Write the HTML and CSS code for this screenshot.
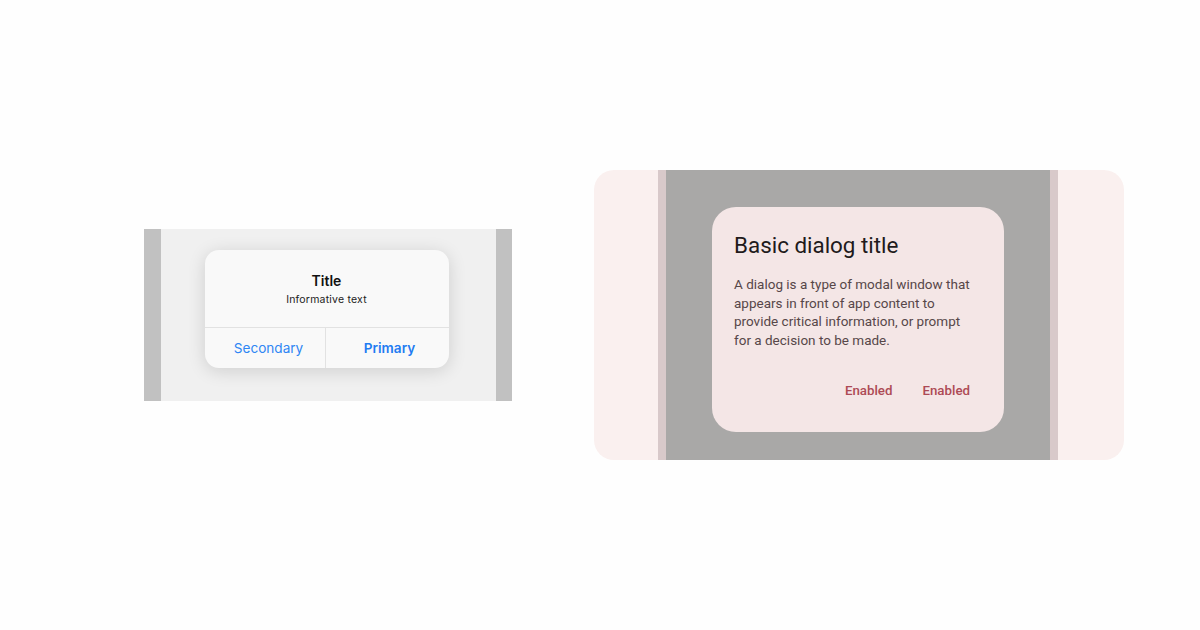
FILE: index.html
```html
<!DOCTYPE html>
<html>
<head>
<meta charset="utf-8">
<link rel="stylesheet" href="styles.css">
</head>
<body>
<main class="stage">
  <section class="ios-frame">
    <div class="ios-strip"></div>
    <div class="ios-screen">
      <div class="ios-alert">
        <div class="ios-body">
          <div class="ios-title">Title</div>
          <div class="ios-text">Informative text</div>
        </div>
        <div class="ios-actions">
          <div class="ios-btn">Secondary</div>
          <div class="ios-btn ios-primary">Primary</div>
        </div>
      </div>
    </div>
    <div class="ios-strip"></div>
  </section>

  <section class="md-frame">
    <div class="md-side"></div>
    <div class="md-strip"></div>
    <div class="md-screen">
      <div class="md-dialog">
        <h2 class="md-title">Basic dialog title</h2>
        <p class="md-text">A dialog is a type of modal window that appears in front of app content to provide critical information, or prompt for a decision to be made.</p>
        <div class="md-actions">
          <span class="md-btn">Enabled</span>
          <span class="md-btn">Enabled</span>
        </div>
      </div>
    </div>
    <div class="md-strip"></div>
    <div class="md-side md-side-r"></div>
  </section>
</main>
</body>
</html>
```

FILE: styles.css
```css
* { box-sizing: border-box; }
html, body { margin: 0; padding: 0; background: #fefefe; }
.stage {
  width: 1200px;
  height: 630px;
  display: flex;
  align-items: center;
  padding-left: 144px;
  gap: 82px;
}

/* iOS alert */
.ios-frame {
  width: 368px;
  height: 172px;
  display: flex;
}
.ios-strip { width: 17px; background: #c1c1c1; }
.ios-strip:last-child { width: 16px; }
.ios-screen {
  flex: 1;
  background: #f0f0f0;
  display: flex;
  justify-content: center;
  align-items: flex-start;
  padding-top: 21px;
  padding-right: 4px;
}
.ios-alert {
  width: 244px;
  height: 118px;
  background: #f9f9f9;
  border-radius: 14px;
  box-shadow: 0 3px 18px rgba(0,0,0,0.14);
  display: flex;
  flex-direction: column;
  font-family: Inter, "Liberation Sans", sans-serif;
  overflow: hidden;
}
.ios-body {
  height: 78px;
  display: flex;
  flex-direction: column;
  align-items: center;
  padding-top: 22px;
  border-bottom: 1px solid #e2e2e2;
}
.ios-title { font-size: 14px; font-weight: 600; color: #111; line-height: 18px; }
.ios-text { font-size: 10.5px; color: #222; line-height: 14px; margin-top: 3px; letter-spacing: 0.2px; }
.ios-actions { flex: 1; display: flex; }
.ios-btn {
  flex: 1;
  display: flex;
  align-items: center;
  justify-content: center;
  font-size: 13.6px;
  color: #2f86f4;
}
.ios-btn:first-child { border-right: 1px solid #e2e2e2; padding-left: 8px; flex: 0 0 121px; }
.ios-primary { font-weight: 600; color: #1f7cf2; padding-left: 5px; }

/* Material dialog */
.md-frame {
  width: 530px;
  height: 290px;
  border-radius: 20px;
  overflow: hidden;
  display: flex;
  background: #faf0ef;
}
.md-side { width: 64px; }
.md-side-r { width: 66px; }
.md-strip { width: 8px; background: #d8c9ca; }
.md-screen {
  width: 384px;
  background: #a9a8a7;
  display: flex;
  justify-content: center;
  align-items: flex-start;
  padding-top: 37px;
}
.md-dialog {
  width: 292px;
  height: 225px;
  background: #f4e6e6;
  border-radius: 24px;
  padding: 23px 34px 0 22px;
  font-family: Roboto, "Liberation Sans", sans-serif;
}
.md-title {
  margin: 0;
  font-size: 22.4px;
  font-weight: 400;
  line-height: 30px;
  color: #211a1b;
}
.md-text {
  margin: 15px 0 0 0;
  font-size: 13.5px;
  line-height: 18.7px;
  color: #574749;
}
.md-actions {
  display: flex;
  justify-content: flex-end;
  gap: 30px;
  margin-top: 32px;
}
.md-btn {
  font-size: 13.3px;
  font-weight: 500;
  color: #ad4a55;
  line-height: 18px;
}
```
